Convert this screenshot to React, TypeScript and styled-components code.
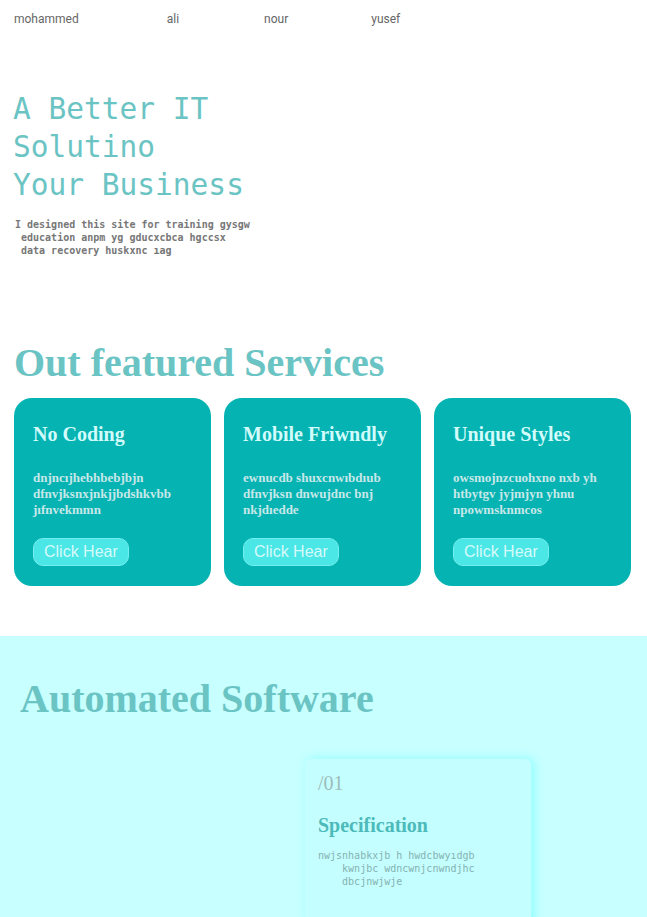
import React from "react";
import styled, { createGlobalStyle } from "styled-components";

const Global = createGlobalStyle`
  html, body { margin: 0; padding: 0; background: #ffffff; }
  body { font-family: "Liberation Serif", serif; }
  * { box-sizing: border-box; }
`;

const Nav = styled.nav`
  display: flex;
  padding: 12px 14px 0;
`;

const NavLink = styled.a<{ $gap: number }>`
  margin-left: ${(p) => p.$gap}px;
  font-family: Roboto, "Liberation Sans", sans-serif;
  font-size: 12px;
  line-height: 14px;
  color: #666666;
  text-decoration: none;
`;

const Hero = styled.header`
  padding: 64px 0 0 13px;
`;

const HeroTitle = styled.h1`
  margin: 0;
  font-family: "DejaVu Sans Mono", monospace;
  font-weight: normal;
  font-size: 29.5px;
  line-height: 38px;
  color: #6bc4c4;
`;

const HeroText = styled.p`
  margin: 14px 0 0 2px;
  font-family: "DejaVu Sans Mono", monospace;
  font-weight: bold;
  font-size: 10px;
  line-height: 13px;
  color: #777777;
  white-space: pre;
`;

const Services = styled.section`
  padding: 83px 0 50px;
`;

const SectionTitle = styled.h2<{ $inset: number }>`
  margin: 0;
  padding-left: ${(p) => p.$inset}px;
  font-family: "Liberation Serif", serif;
  font-weight: bold;
  font-size: 40px;
  line-height: 46px;
  color: #6bc4c4;
`;

const CardGrid = styled.div`
  display: grid;
  grid-template-columns: repeat(3, 197px);
  gap: 13px;
  padding: 12px 14px 0;
`;

const Card = styled.article`
  background: #05b3b3;
  border-radius: 18px;
  padding: 25px 19px 20px;
  display: flex;
  flex-direction: column;
  align-items: flex-start;
`;

const CardTitle = styled.h3`
  margin: 0;
  font-family: "Liberation Serif", serif;
  font-weight: bold;
  font-size: 20px;
  line-height: 23px;
  color: #d2fbfb;
`;

const CardText = styled.p`
  margin: 24px 0 0;
  font-family: "Liberation Serif", serif;
  font-weight: bold;
  font-size: 13px;
  line-height: 16px;
  color: #c8e8e8;
`;

const HearButton = styled.button`
  margin-top: 20px;
  height: 28px;
  padding: 0 10px;
  border: 1px solid #74eeee;
  border-radius: 10px;
  background: #4be7e7;
  color: #d6fafa;
  font-family: "Liberation Sans", Arial, sans-serif;
  font-size: 16px;
  line-height: 26px;
  cursor: pointer;
`;

const Automated = styled.section`
  background: #c8ffff;
  padding: 40px 0 40px;
`;

const FeatureRow = styled.div`
  display: grid;
  grid-template-columns: 305px 226px 1fr;
  padding-top: 37px;
`;

const FeatureCard = styled.article`
  grid-column: 2;
  background: #c5fefe;
  border-radius: 6px;
  padding: 13px 13px 40px;
  box-shadow: 4px 0 10px #98ffff, 0 -2px 8px #b8ffff;
`;

const FeatureNum = styled.div`
  font-family: "Liberation Serif", serif;
  font-size: 20px;
  line-height: 23px;
  color: #9cbcbc;
`;

const FeatureTitle = styled.h3`
  margin: 19px 0 0;
  font-family: "Liberation Serif", serif;
  font-weight: bold;
  font-size: 20px;
  line-height: 23px;
  color: #4cbaba;
`;

const FeatureText = styled.p`
  margin: 12px 0 0;
  font-family: "DejaVu Sans Mono", monospace;
  font-size: 10px;
  line-height: 13px;
  color: #84b2b2;
  white-space: pre;
`;

const navItems = [
  { label: "mohammed", gap: 0 },
  { label: "ali", gap: 88 },
  { label: "nour", gap: 85 },
  { label: "yusef", gap: 83 },
];

const cards = [
  { title: "No Coding", text: ["dnjncıjhebhbebjbjn", "dfnvjksnxjnkjjbdshkvbb", "jıfnvekmmn"] },
  { title: "Mobile Friwndly", text: ["ewnucdb shuxcnwıbdıub", "dfnvjksn dnwujdnc bnj", "nkjdıedde"] },
  { title: "Unique Styles", text: ["owsmojnzcuohxno nxb yh", "htbytgv jyjmjyn yhnu", "npowmsknmcos"] },
];

export default function App() {
  return (
    <>
      <Global />
      <Nav>
        {navItems.map((n) => (
          <NavLink key={n.label} href="#" $gap={n.gap}>
            {n.label}
          </NavLink>
        ))}
      </Nav>
      <Hero>
        <HeroTitle>
          A Better IT
          <br />
          Solutino
          <br />
          Your Business
        </HeroTitle>
        <HeroText>{"I designed this site for training gysgw\n education anpm yg gducxcbca hgccsx\n data recovery huskxnc ıag"}</HeroText>
      </Hero>
      <Services>
        <SectionTitle $inset={14}>Out featured Services</SectionTitle>
        <CardGrid>
          {cards.map((c) => (
            <Card key={c.title}>
              <CardTitle>{c.title}</CardTitle>
              <CardText>
                {c.text.map((t, i) => (
                  <React.Fragment key={i}>
                    {t}
                    {i < c.text.length - 1 && <br />}
                  </React.Fragment>
                ))}
              </CardText>
              <HearButton>Click Hear</HearButton>
            </Card>
          ))}
        </CardGrid>
      </Services>
      <Automated>
        <SectionTitle $inset={20}>Automated Software</SectionTitle>
        <FeatureRow>
          <FeatureCard>
            <FeatureNum>/01</FeatureNum>
            <FeatureTitle>Specification</FeatureTitle>
            <FeatureText>{"nwjsnhabkxjb h hwdcbwyıdgb\n    kwnjbc wdncwnjcnwndjhc\n    dbcjnwjwje"}</FeatureText>
          </FeatureCard>
        </FeatureRow>
      </Automated>
    </>
  );
}
